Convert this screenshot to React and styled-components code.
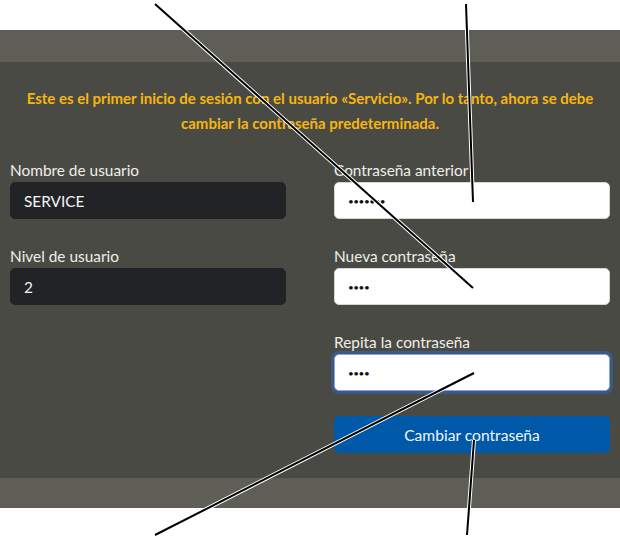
import React from "react"
import styled, { createGlobalStyle } from "styled-components"

const GlobalStyle = createGlobalStyle`
  html, body {
    margin: 0;
    background: #ffffff;
  }
  body {
    font-family: Lato, "Open Sans", sans-serif;
  }
`

const Page = styled.div`
  position: relative;
  width: 620px;
  height: 540px;
  padding-top: 30px;
  box-sizing: border-box;
  overflow: hidden;
`

const Band = styled.div`
  height: ${(p) => p.h}px;
  background: #5f5e56;
`

const Panel = styled.main`
  height: 416px;
  box-sizing: border-box;
  background: #4a4a44;
  padding: 24px 10px 0;
`

const Notice = styled.p`
  margin: 0 0 24px;
  color: #f6b60e;
  font-weight: 700;
  font-size: 15px;
  line-height: 25px;
  text-align: center;
`

const Grid = styled.div`
  display: grid;
  grid-template-columns: 276px 276px;
  column-gap: 48px;
`

const Column = styled.div`
  display: flex;
  flex-direction: column;
  gap: 27px;
`

const Field = styled.label`
  display: flex;
  flex-direction: column;
  gap: 2px;
`

const Label = styled.span`
  color: #eeeeea;
  font-size: 15.4px;
  line-height: 20px;
`

const Input = styled.input`
  height: 37px;
  box-sizing: border-box;
  border-radius: 5px;
  padding: 0 13px;
  font-family: Lato, "Open Sans", sans-serif;
  font-size: ${(p) => (p.secret ? "10px" : "15.4px")};
  outline: none;
  border: 1px solid ${(p) => (p.dark ? "#212327" : p.focused ? "#86a8e0" : "#d6d6d6")};
  background: ${(p) => (p.dark ? "#212327" : "#ffffff")};
  color: ${(p) => (p.dark ? "#f4f4f4" : "#111111")};
  box-shadow: ${(p) => (p.focused ? "0 0 0 3px #3e5a82" : "none")};
  letter-spacing: ${(p) => (p.secret ? "-0.5px" : "0")};
`

const Button = styled.button`
  margin-top: -2px;
  height: 37px;
  border: none;
  border-radius: 5px;
  background: #0058a8;
  color: #f2f4f8;
  font-family: Lato, "Open Sans", sans-serif;
  font-size: 15.6px;
`

const Callouts = styled.svg`
  position: absolute;
  left: 0;
  top: 0;
  pointer-events: none;
`

const lines = [
  [155, 4, 473, 288],
  [466, 4, 473, 202],
  [155, 535, 474, 373],
  [467, 535, 474, 440],
]

const App = () => {
  return (
    <>
      <GlobalStyle />
      <Page>
        <Band h={32} />
        <Panel>
          <Notice>
            Este es el primer inicio de sesión con el usuario «Servicio». Por lo tanto, ahora se debe
            <br />
            cambiar la contraseña predeterminada.
          </Notice>
          <Grid>
            <Column>
              <Field>
                <Label>Nombre de usuario</Label>
                <Input dark readOnly value="SERVICE" />
              </Field>
              <Field>
                <Label>Nivel de usuario</Label>
                <Input dark readOnly value="2" />
              </Field>
            </Column>
            <Column>
              <Field>
                <Label>Contraseña anterior</Label>
                <Input secret readOnly value="•••••••" />
              </Field>
              <Field>
                <Label>Nueva contraseña</Label>
                <Input secret readOnly value="••••" />
              </Field>
              <Field>
                <Label>Repita la contraseña</Label>
                <Input secret focused readOnly value="••••" />
              </Field>
              <Button>Cambiar contraseña</Button>
            </Column>
          </Grid>
        </Panel>
        <Band h={30} />
        <Callouts width="620" height="540" viewBox="0 0 620 540">
          {lines.map(([x1, y1, x2, y2], i) => (
            <g key={i}>
              <line x1={x1} y1={y1} x2={x2} y2={y2} stroke="#ffffff" strokeWidth="4" />
              <line x1={x1} y1={y1} x2={x2} y2={y2} stroke="#000000" strokeWidth="2" />
            </g>
          ))}
        </Callouts>
      </Page>
    </>
  )
}

export default App
